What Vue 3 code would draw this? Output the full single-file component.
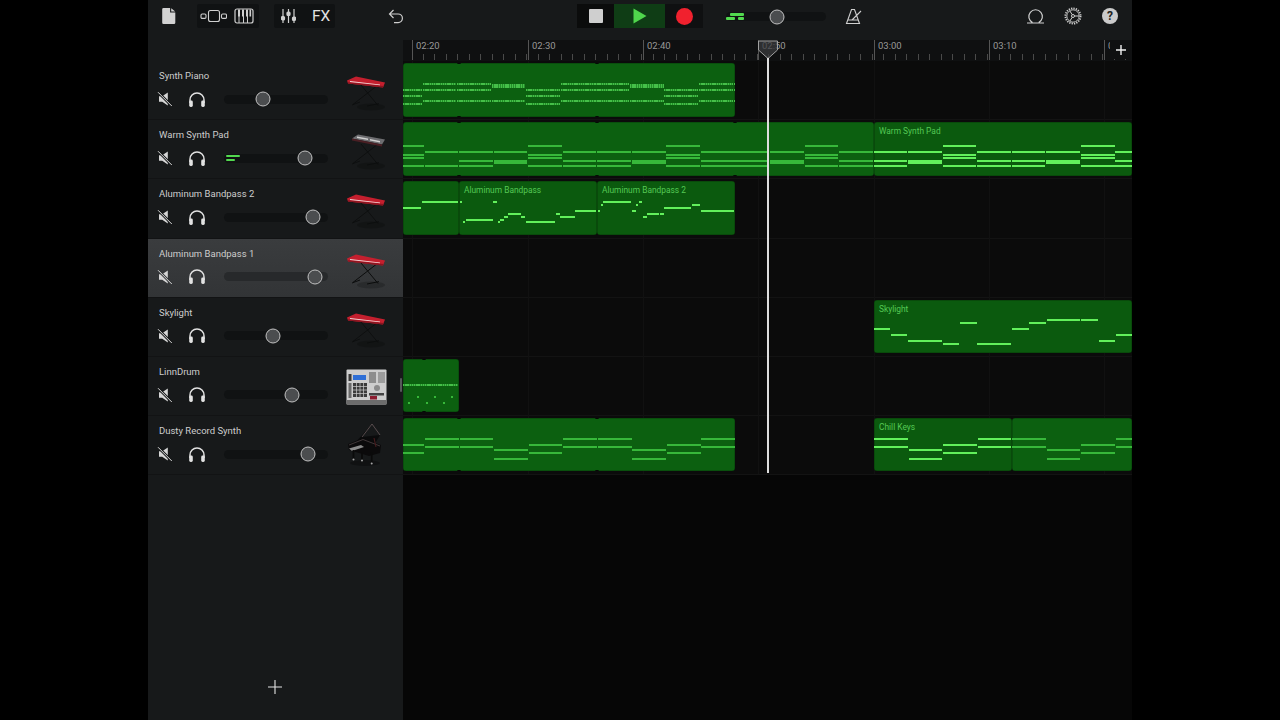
<script setup>
import { computed } from "vue";

// 트랙 목록
const tracks = [
  { name: "Synth Piano", knob: 263, icon: "red" },
  { name: "Warm Synth Pad", knob: 305, icon: "silver", meter: true },
  { name: "Aluminum Bandpass 2", knob: 313, icon: "red" },
  { name: "Aluminum Bandpass 1", knob: 315, icon: "red", selected: true },
  { name: "Skylight", knob: 273, icon: "red" },
  { name: "LinnDrum", knob: 292, icon: "mpc" },
  { name: "Dusty Record Synth", knob: 308, icon: "piano" },
];

// 눈금자
const rulerMarks = [
  { x: 412, label: "02:20" },
  { x: 528, label: "02:30" },
  { x: 643, label: "02:40" },
  { x: 758, label: "02:50" },
  { x: 874, label: "03:00" },
  { x: 989, label: "03:10" },
  { x: 1104, label: "0" },
];

const UNIT = 34.55;
// 4칸 반복 패턴을 음표 목록으로 바꾼다
const repeat = (start, end, pattern, dash) => {
  const out = [];
  let x = start;
  let i = 0;
  while (x < end) {
    for (const y of pattern[i % pattern.length]) {
      const l = Math.max(x, 403);
      const r = Math.min(x + UNIT - 0.8, end);
      if (r > l) out.push({ x: l, y, w: r - l, dash });
    }
    x += UNIT;
    i++;
  }
  return out;
};
const list = (rows) => rows.map(([x, y, w]) => ({ x, y, w }));

const E = [90, 96, 104];
const F = [84, 90, 101];
const G = [85, 87, 101];
const D = [146, 155, 158, 166];
const B = [152, 161, 166];
const C = [152, 161, 163];
const U1 = [439, 447];
const U2 = [450, 459];
const U3 = [445, 453];

const clips = [
  {
    x: 403, y: 63, w: 332, h: 54, seams: [459, 597], tone: "dim",
    notes: repeat(388, 735, [E, F, F, G], true),
  },
  {
    x: 403, y: 122, w: 471, h: 54, seams: [459, 597, 735], tone: "dim",
    notes: [...repeat(390, 424, [D]), ...repeat(424.5, 459, [[152, 166]]), ...repeat(459, 874, [B, C, D, B])],
  },
  {
    x: 874, y: 122, w: 258, h: 54, title: "Warm Synth Pad", seams: [], tone: "bright",
    notes: repeat(873.5, 1132, [B, C, D, B]),
  },
  {
    x: 403, y: 181, w: 56, h: 54, seams: [], tone: "bright",
    notes: list([[403, 208, 18], [422, 202, 36]]),
  },
  {
    x: 459, y: 181, w: 138, h: 54, title: "Aluminum Bandpass", seams: [], tone: "bright",
    notes: list([
      [460, 202, 2], [463, 222, 1.5], [466, 220, 27], [493, 202, 4], [498, 222, 2], [500, 220, 3.5], [504, 217, 3.5],
      [508, 214, 13], [521, 217, 4], [526, 222, 29], [556, 214, 3.5], [560, 217, 15], [575, 211, 21],
    ]),
  },
  {
    x: 597, y: 181, w: 138, h: 54, title: "Aluminum Bandpass 2", seams: [], tone: "bright",
    notes: list([
      [598, 211, 2], [601, 205, 1.5], [603, 202, 28], [632, 211, 3.5], [636, 205, 2], [639, 202, 3], [643, 217, 3.5],
      [647, 214, 12], [660, 214, 3.5], [664, 208, 27], [692, 205, 8], [701, 211, 33],
    ]),
  },
  {
    x: 874, y: 300, w: 258, h: 53, title: "Skylight", seams: [], tone: "bright",
    notes: list([
      [874, 329, 16], [891, 335, 16], [908, 341, 34], [943, 344, 16], [960, 323, 17], [977, 344, 34],
      [1012, 329, 17], [1029, 323, 17], [1047, 320, 33], [1081, 320, 17], [1099, 341, 16], [1116, 335, 16],
    ]),
  },
  {
    x: 403, y: 359, w: 56, h: 53, seams: [424], tone: "dim",
    notes: [
      { x: 403, y: 385, w: 55, dash: true },
      ...[[417, 397], [434, 397], [451, 397], [408, 403], [426, 403], [443, 403]].map(([x, y]) => ({ x, y, w: 1.5 })),
    ],
  },
  {
    x: 403, y: 418, w: 332, h: 53, seams: [459, 597], tone: "dim",
    notes: repeat(390.5, 735, [U3, U1, U1, U2]),
  },
  {
    x: 874, y: 418, w: 138, h: 53, title: "Chill Keys", seams: [], tone: "bright",
    notes: repeat(874, 1012, [U1, U2, U3, U1]),
  },
  {
    x: 1012, y: 418, w: 120, h: 53, seams: [], tone: "dim",
    notes: repeat(1012, 1132, [U1, U2, U3, U1]),
  },
];

const laneIndexes = computed(() => tracks.map((t, i) => i));
</script>

<template>
  <div class="app">
    <!-- 상단 툴바 -->
    <header class="toolbar">
      <svg class="ic doc" width="16" height="18" viewBox="0 0 16 18">
        <path d="M2.5 1h6.6v4.6h5.2v10.1a1.3 1.3 0 0 1-1.3 1.3H2.5a1.3 1.3 0 0 1-1.3-1.3V2.3A1.3 1.3 0 0 1 2.5 1zM10.2 1.2l4 3.4h-4z" fill="#d2d2d2" />
      </svg>

      <div class="group view-group">
        <svg class="ic" width="27" height="14" viewBox="0 0 27 14" fill="none" stroke="#cfcfcf" stroke-width="1.1">
          <rect x="1" y="5" width="5" height="4.4" rx="1.2" />
          <rect x="8.5" y="1.5" width="11" height="11" rx="2" />
          <rect x="21.5" y="5" width="5" height="4.4" rx="1.2" />
        </svg>
        <svg class="ic" width="20" height="16" viewBox="0 0 20 16">
          <rect x="1" y="1" width="18" height="14" rx="2" fill="none" stroke="#cfcfcf" stroke-width="1.2" />
          <path d="M4 1.5h2v7h-2zM8 1.5h2v7h-2zM12 1.5h2v7h-2zM15.5 1.5h1.6v7h-1.6z" fill="#cfcfcf" />
          <path d="M5 8v7M9.5 8v7M13.5 8v7" stroke="#cfcfcf" stroke-width="1" />
        </svg>
      </div>

      <div class="group mix-group">
        <svg class="ic" width="15" height="16" viewBox="0 0 15 16" stroke="#cfcfcf" stroke-width="1.2" fill="#cfcfcf">
          <path d="M2 1v14M7.5 1v14M13 1v14" />
          <rect x="0.5" y="8.5" width="3" height="3.4" rx="1" />
          <rect x="6" y="4" width="3" height="3.4" rx="1" />
          <rect x="11.5" y="9" width="3" height="3.4" rx="1" />
        </svg>
        <span class="fx">FX</span>
      </div>

      <svg class="ic undo" width="16" height="16" viewBox="0 0 16 16" fill="none" stroke="#cfcfcf" stroke-width="1.2">
        <path d="M5.5 2 1.5 6l4 4M1.5 6h8.6a4 4 0 0 1 0 8.6H6" />
      </svg>

      <div class="transport">
        <div class="t-btn stop"><span class="stop-square"></span></div>
        <div class="t-btn play">
          <svg width="14" height="16" viewBox="0 0 14 16"><path d="M0.5 0.5 13.5 8 0.5 15.5z" fill="#4fd64c" /></svg>
        </div>
        <div class="t-btn rec"><span class="rec-dot"></span></div>
      </div>

      <div class="master slider">
        <span class="meter">
          <i class="bar-top"></i>
          <i class="bar-low-a"></i>
          <i class="bar-low-b"></i>
        </span>
        <span class="knob master-knob"></span>
      </div>

      <svg class="ic metro" width="18" height="17" viewBox="0 0 18 17" fill="none" stroke="#cfcfcf" stroke-width="1.1">
        <path d="M6.5 1.5h3l5 14h-13zM2.5 12h11M7 12l9-9" />
      </svg>

      <svg class="ic loop" width="19" height="16" viewBox="0 0 19 16" fill="none" stroke="#cfcfcf" stroke-width="1.2">
        <path d="M1 15h17M6.5 14.6a6.8 6.8 0 1 1 6.2 0" />
      </svg>
      <svg class="ic gear" width="18" height="18" viewBox="0 0 18 18" fill="none" stroke="#cfcfcf">
        <circle cx="9" cy="9" r="7.6" stroke-width="1.8" stroke-dasharray="1.3 1.1" />
        <circle cx="9" cy="9" r="6.2" stroke-width="0.9" />
        <circle cx="9" cy="9" r="1.5" stroke-width="1" />
        <path d="M10.5 9h4.7M8.2 7.7 5.8 3.8M8.2 10.3l-2.4 3.9" stroke-width="1" />
      </svg>
      <span class="help">?</span>
    </header>

    <div class="main">
      <!-- 트랙 헤더 -->
      <aside class="sidebar">
        <div v-for="t in tracks" :key="t.name" class="track" :class="{ selected: t.selected }">
          <div class="track-left">
            <div class="track-name">{{ t.name }}</div>
            <div class="track-controls">
              <svg width="16" height="16" viewBox="0 0 16 16" class="mute">
                <path d="M2 5.2h3.2L10.8 1.4v13.2L5.2 10.8H2z" fill="#d6d6d6" />
                <path d="M1 1.2 14.8 15" :stroke="t.selected ? '#37393b' : '#17191a'" stroke-width="2.6" />
                <path d="M1 1.2 14.8 15" stroke="#d6d6d6" stroke-width="1" />
              </svg>
              <svg width="18" height="17" viewBox="0 0 18 17" class="phones">
                <path d="M2 12V9a7 7 0 0 1 14 0v3" fill="none" stroke="#e2e2e2" stroke-width="1.5" />
                <rect x="1.2" y="9.6" width="3.6" height="6.4" rx="1.4" fill="#e2e2e2" />
                <rect x="13.2" y="9.6" width="3.6" height="6.4" rx="1.4" fill="#e2e2e2" />
              </svg>
              <div class="slider">
                <span v-if="t.meter" class="meter small">
                  <i class="bar-top"></i>
                  <i class="bar-low-a"></i>
                </span>
                <span class="knob" :style="{ left: t.knob - 224 + 'px' }"></span>
              </div>
            </div>
          </div>

          <!-- 악기 그림 -->
          <svg v-if="t.icon === 'red' || t.icon === 'silver'" class="inst" width="42" height="42" viewBox="0 0 42 42">
            <ellipse cx="24" cy="33" rx="14" ry="3.5" fill="#000" opacity="0.2" />
            <path d="M14 11 31 31.5M31 11 6 30.4M20 32l12-2.4M5 31l8-3" stroke="#0b0c0c" stroke-width="1" fill="none" :opacity="t.selected ? 1 : 0.75" />
            <template v-if="t.icon === 'red'">
              <path d="M0 6.4 9 2.4 38 8.4 36 13.4 1 9.4z" fill="#c41f2e" />
              <path d="M1 8.2 36.6 12 36 13.4 1 9.6z" fill="#8a1520" />
              <path d="M3 7 33 10.6v0.7L3 7.9z" fill="#f0d5d5" />
            </template>
            <template v-else>
              <path d="M5 5.4 11 1.4 38 6.6 35 11.6z" fill="#6d6d70" />
              <path d="M5 5.4 35 11.6V13.6L5 7.4z" fill="#4a1f24" />
              <path d="M10 3.6l11 2v1.4l-11-2zM23 6l10 2v1.4L23 7.4z" fill="#cfcfcf" />
            </template>
          </svg>

          <svg v-else-if="t.icon === 'mpc'" class="inst mpc" width="42" height="37" viewBox="0 0 42 37">
            <rect x="0.5" y="0.5" width="40" height="35" rx="1" fill="#cdcdcd" />
            <rect x="0.5" y="31" width="40" height="4.5" fill="#6c6c6c" />
            <rect x="7" y="6" width="13" height="5" fill="#2f6fd6" />
            <rect x="2.5" y="5" width="3" height="7" fill="#3a3a3a" />
            <rect x="23" y="3" width="7" height="11" fill="#8d8d8d" />
            <rect x="32" y="3" width="7" height="11" fill="#9c9c9c" />
            <rect x="2.5" y="14" width="3" height="15" fill="#6a6a6a" />
            <rect x="7" y="14" width="14" height="14" fill="#3a3a3a" />
            <path d="M10.5 14v14M14 14v14M17.5 14v14M7 17.5h14M7 21h14M7 24.5h14" stroke="#cdcdcd" stroke-width="0.7" />
            <circle cx="31" cy="19" r="3" fill="#8a8a8a" />
            <rect x="23" y="24" width="15" height="2.5" fill="#444" />
            <rect x="24" y="27" width="7" height="3.5" fill="#8d1c30" />
          </svg>

          <svg v-else class="inst piano" width="42" height="46" viewBox="0 0 42 46">
            <ellipse cx="18" cy="40" rx="15" ry="3" fill="#000" opacity="0.3" />
            <path d="M25 1 15 14 33 12 26 24 8 20z" fill="#0a0a0b" />
            <path d="M25 1 15 14M25 1l8 11" stroke="#6a5a5c" stroke-width="0.8" fill="none" />
            <path d="M1 21 16 15 34 22 33 30 22 33 2 27z" fill="#0b0a0b" />
            <path d="M2 22 16 16.5M16 16.5 33 23" stroke="#4d4344" stroke-width="0.8" fill="none" />
            <path d="M2 25.5 14 22 17 24 5 28z" fill="#8b8b8b" />
            <path d="M27 15 29 24" stroke="#4b1c1e" stroke-width="1" />
            <path d="M6.5 27v9M15 29v8M24.7 29v11" stroke="#0a0a0a" stroke-width="1.8" />
            <circle cx="6.5" cy="36.5" r="1" fill="#a6a6a6" />
            <circle cx="15" cy="37.5" r="1" fill="#a6a6a6" />
            <circle cx="24.7" cy="40.5" r="1" fill="#a6a6a6" />
          </svg>
        </div>

        <div class="add-track">
          <svg width="14" height="14" viewBox="0 0 14 14"><path d="M7 0v14M0 7h14" stroke="#e4e4e4" stroke-width="1.1" /></svg>
        </div>
        <span class="handle"></span>
      </aside>

      <!-- 타임라인 -->
      <section class="arrange">
        <div class="ruler">
          <div v-for="m in rulerMarks" :key="m.label" class="mark" :style="{ left: m.x - 403 + 'px' }">{{ m.label }}</div>
          <div class="ruler-add">
            <svg width="10" height="10" viewBox="0 0 10 10"><path d="M5 0v10M0 5h10" stroke="#f0f0f0" stroke-width="1.4" /></svg>
          </div>
        </div>

        <div class="lanes">
          <div v-for="i in laneIndexes" :key="i" class="lane"></div>
          <div v-for="m in rulerMarks" :key="'g' + m.label" class="gridline" :style="{ left: m.x - 403 + 'px' }"></div>

          <div
            v-for="c in clips"
            :key="c.x + '-' + c.y"
            class="clip"
            :class="c.tone"
            :style="{ left: c.x - 403 + 'px', top: c.y - 61 + 'px', width: c.w + 'px', height: c.h + 'px' }"
          >
            <span v-if="c.title" class="clip-title">{{ c.title }}</span>
            <i
              v-for="(n, k) in c.notes"
              :key="k"
              class="note"
              :class="[c.tone, { dash: n.dash }]"
              :style="{ left: n.x - c.x + 'px', top: n.y - c.y - 1 + 'px', width: n.w + 'px' }"
            ></i>
            <template v-for="s in c.seams" :key="s">
              <b class="seam top" :style="{ left: s - c.x - 2 + 'px' }"></b>
              <b class="seam bottom" :style="{ left: s - c.x - 2 + 'px' }"></b>
            </template>
          </div>
        </div>

        <div class="arrange-empty"></div>

        <!-- 재생 헤드 -->
        <div class="playhead">
          <svg width="22" height="20" viewBox="0 0 22 20">
            <path d="M1.5 1h19v9L11 18.5 1.5 10z" fill="rgba(58,60,62,0.72)" stroke="#a0a0a0" stroke-width="1" />
          </svg>
          <span class="playhead-line"></span>
        </div>
      </section>
    </div>
  </div>
</template>

<style>
html,
body {
  margin: 0;
  background: #000;
}
</style>

<style scoped>
.app {
  width: 984px;
  height: 720px;
  margin-left: 148px;
  display: flex;
  flex-direction: column;
  background: #17191a;
  font-family: Roboto, "Liberation Sans", Arial, sans-serif;
  overflow: hidden;
}

/* 툴바 */
.toolbar {
  height: 40px;
  flex: none;
  display: flex;
  align-items: flex-start;
  background: #17191a;
  box-sizing: border-box;
  padding-top: 4px;
}
.ic {
  flex: none;
  display: block;
}
.doc {
  margin: 3px 0 0 13px;
}
.group {
  height: 24px;
  display: flex;
  align-items: center;
  background: #101213;
  border-radius: 2px;
}
.view-group {
  width: 62px;
  margin-left: 20px;
  padding-left: 3px;
  gap: 7px;
  box-sizing: border-box;
}
.mix-group {
  width: 61px;
  margin-left: 15px;
  padding-left: 7px;
  gap: 16px;
  box-sizing: border-box;
}
.fx {
  color: #e2e2e2;
  font-size: 15.5px;
  line-height: 24px;
}
.undo {
  margin: 4px 0 0 53px;
}
.transport {
  display: flex;
  height: 24px;
  margin-left: 173px;
  width: 126px;
  background: #0f1011;
}
.t-btn {
  display: flex;
  align-items: center;
  justify-content: center;
}
.stop {
  width: 37px;
  background: #0b0c0c;
}
.stop-square {
  width: 14px;
  height: 14px;
  border-radius: 1px;
  background: #cfcfcf;
}
.play {
  width: 51px;
  background: #0f3d15;
}
.rec {
  width: 38px;
}
.rec-dot {
  width: 17px;
  height: 17px;
  border-radius: 50%;
  background: #f0212e;
}
.slider {
  position: relative;
  width: 104px;
  height: 9px;
  border-radius: 5px;
  background: #101213;
}
.master {
  width: 100px;
  margin: 8px 0 0 23px;
}
.knob {
  position: absolute;
  top: 50%;
  width: 15px;
  height: 15px;
  box-sizing: border-box;
  border-radius: 50%;
  background: #4b4d4f;
  border: 1.4px solid #c2c2c2;
  transform: translate(-50%, -50%);
}
.master-knob {
  left: 51px;
}
.meter {
  position: absolute;
  left: 0;
  top: 1px;
  width: 18px;
  height: 7px;
}
.meter i {
  position: absolute;
  height: 2.5px;
  border-radius: 1px;
  background: #52d94f;
}
.bar-top {
  left: 4px;
  top: 0;
  width: 14px;
}
.bar-low-a {
  left: 0;
  top: 4px;
  width: 9px;
}
.bar-low-b {
  left: 12px;
  top: 4px;
  width: 6px;
}
.meter.small {
  left: 2px;
  width: 14px;
}
.meter.small .bar-top {
  left: 0;
}
.metro {
  margin: 4px 0 0 19px;
}
.loop {
  margin: 4px 0 0 163px;
}
.gear {
  margin: 3px 0 0 19px;
}
.help {
  width: 16px;
  height: 16px;
  margin: 4px 0 0 20px;
  border-radius: 50%;
  background: #cbcbcb;
  color: #222;
  font-size: 12px;
  font-weight: 700;
  line-height: 16px;
  text-align: center;
}

.main {
  flex: 1;
  display: flex;
  min-height: 0;
}

/* 사이드바 */
.sidebar {
  position: relative;
  width: 255px;
  flex: none;
  padding-top: 21px;
  box-sizing: border-box;
  background: #17191a;
}
.track {
  height: 59.2px;
  display: flex;
  justify-content: space-between;
  box-sizing: border-box;
  border-bottom: 1px solid #121314;
  padding: 8px 16px 0 9px;
}
.track.selected {
  background: linear-gradient(#3a3c3e, #323436);
}
.track-left {
  flex: 1;
  min-width: 0;
}
.track-name {
  margin-left: 2px;
  color: #cdcdcd;
  font-size: 9.5px;
  line-height: 13px;
}
.track-controls {
  display: flex;
  align-items: center;
  height: 18px;
  margin-top: 8px;
}
.mute {
  flex: none;
}
.phones {
  flex: none;
  margin-left: 15px;
}
.track-controls .slider {
  flex: none;
  margin-left: 18px;
}
.selected .slider {
  background: #27292b;
}
.inst {
  flex: none;
  margin: 5px -2px 0 0;
}
.inst.mpc {
  margin: 4px -1px 0 0;
}
.inst.piano {
  margin: -1px -2px 0 0;
}
.add-track {
  position: absolute;
  left: 120px;
  top: 640px;
  line-height: 0;
}
.handle {
  position: absolute;
  left: 252px;
  top: 338px;
  width: 2px;
  height: 14px;
  border-radius: 1px;
  background: #55585a;
}

/* 타임라인 */
.arrange {
  position: relative;
  flex: 1;
  display: flex;
  flex-direction: column;
  min-width: 0;
  background: #0a0a0a;
}
.ruler {
  position: relative;
  height: 21px;
  flex: none;
  background-color: #0f1011;
  background-image: repeating-linear-gradient(
    90deg,
    transparent 0,
    transparent 10.52px,
    #4a4a4a 10.52px,
    #4a4a4a 11.52px
  );
  background-size: 100% 6px;
  background-position: 9px 14px;
  background-repeat: no-repeat;
}
.mark {
  position: absolute;
  top: 0;
  height: 20px;
  padding: 0 0 0 3px;
  box-sizing: border-box;
  border-left: 1px solid #555;
  color: #989898;
  font-size: 9.5px;
  line-height: 11px;
  white-space: nowrap;
}
.ruler-add {
  position: absolute;
  right: 0;
  top: 0;
  width: 22px;
  height: 19px;
  display: flex;
  align-items: center;
  justify-content: center;
  background: #0f1011;
  line-height: 0;
}
.lanes {
  position: relative;
  flex: none;
  height: 413px;
  background: #0b0b0b;
}
.lane {
  height: 59.2px;
  box-sizing: border-box;
  border-bottom: 1px solid #131313;
}
.gridline {
  position: absolute;
  top: 0;
  bottom: 0;
  width: 1px;
  background: #111;
}
.arrange-empty {
  flex: 1;
  background: #060606;
}
.clip {
  position: absolute;
  border-radius: 3px;
  overflow: hidden;
  box-shadow: inset 0 0 0 0.5px rgba(0, 0, 0, 0.35);
}
.clip.dim {
  background: #0c6010;
}
.clip.bright {
  background: #0b5a0e;
}
.clip-title {
  position: absolute;
  left: 5px;
  top: 4px;
  color: #55c955;
  font-size: 8.4px;
  line-height: 11px;
  white-space: nowrap;
}
.note {
  position: absolute;
  height: 2px;
  display: block;
}
.note.bright {
  background: #62f05b;
}
.note.dim {
  background: #37b83a;
}
.note.dash {
  background: repeating-linear-gradient(90deg, #45bf48 0, #45bf48 1.4px, #248f2a 1.4px, #248f2a 2.2px);
}
.seam {
  position: absolute;
  width: 4px;
  height: 2px;
  background: #050505;
  border-radius: 50%;
}
.seam.top {
  top: -1px;
}
.seam.bottom {
  bottom: -1px;
}
.playhead {
  position: absolute;
  left: 354px;
  top: 0;
  width: 22px;
  height: 433px;
  display: flex;
  flex-direction: column;
  align-items: center;
}
.playhead svg {
  flex: none;
  display: block;
}
.playhead-line {
  width: 1.5px;
  flex: 1;
  margin-top: -2px;
  background: #dedede;
}
</style>
